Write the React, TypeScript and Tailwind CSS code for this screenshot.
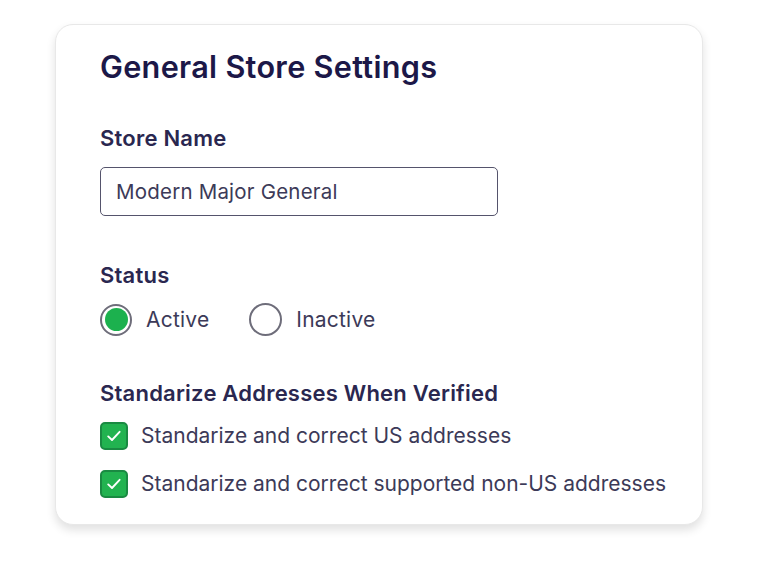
import React from "react";

function Check() {
  return (
    <span className="flex h-[28px] w-[28px] shrink-0 items-center justify-center rounded-[5px] border-2 border-[#1a8a42] bg-[#22b350]">
      <svg width="20" height="20" viewBox="0 0 20 20" fill="none">
        <path d="M4.2 10.4 L8 14 L15.6 5.8" stroke="white" strokeWidth="1.9" strokeLinecap="round" strokeLinejoin="round" />
      </svg>
    </span>
  );
}

export default function App() {
  return (
    <div className="min-h-[562px] w-[759px] bg-white pl-[55px] pt-[24px]" style={{ fontFamily: "Inter, 'Noto Sans', sans-serif" }}>
      <div className="flex h-[501px] w-[648px] flex-col rounded-[18px] border border-[#e8e8e8] bg-white pl-[44px] pt-[22px] shadow-[0_5px_10px_rgba(0,0,0,0.12)]">
        <h1 className="text-[30.6px] font-semibold leading-[40px] tracking-[0.01em] text-[#1c1848]">General Store Settings</h1>

        <div className="mt-[37px] text-[22px] font-semibold leading-[28px] tracking-[0.01em] text-[#2a2750]">Store Name</div>
        <div className="mt-[15px] flex h-[49px] w-[398px] items-center rounded-[5px] border-[1.5px] border-[#55546c] pl-[15px] text-[20.5px] leading-[28px] tracking-[0.01em] text-[#3c3a58]">
          Modern Major General
        </div>

        <div className="mt-[45px] text-[22px] font-semibold leading-[28px] tracking-[0.01em] text-[#2a2750]">Status</div>
        <div className="mt-[14px] flex items-center">
          <span className="flex h-[32px] w-[32px] items-center justify-center rounded-full border-2 border-[#6e6d7a] bg-white">
            <span className="h-[23px] w-[23px] rounded-full bg-[#1cb14e]" />
          </span>
          <span className="ml-[14px] text-[21px] leading-[28px] tracking-[0.01em] text-[#3c3a58]">Active</span>
          <span className="ml-[40px] h-[33px] w-[33px] rounded-full border-2 border-[#6e6d7a] bg-white" />
          <span className="ml-[14px] text-[21px] leading-[28px] tracking-[0.01em] text-[#3c3a58]">Inactive</span>
        </div>

        <div className="mt-[43px] text-[22px] font-semibold leading-[28px] tracking-[0.01em] text-[#2a2750]">Standarize Addresses When Verified</div>
        <div className="mt-[15px] flex items-center">
          <Check />
          <span className="ml-[13px] text-[21px] leading-[28px] text-[#3c3a58]">Standarize and correct US addresses</span>
        </div>
        <div className="mt-[20px] flex items-center">
          <Check />
          <span className="ml-[13px] text-[21px] leading-[28px] text-[#3c3a58]">Standarize and correct supported non-US addresses</span>
        </div>
      </div>
    </div>
  );
}
